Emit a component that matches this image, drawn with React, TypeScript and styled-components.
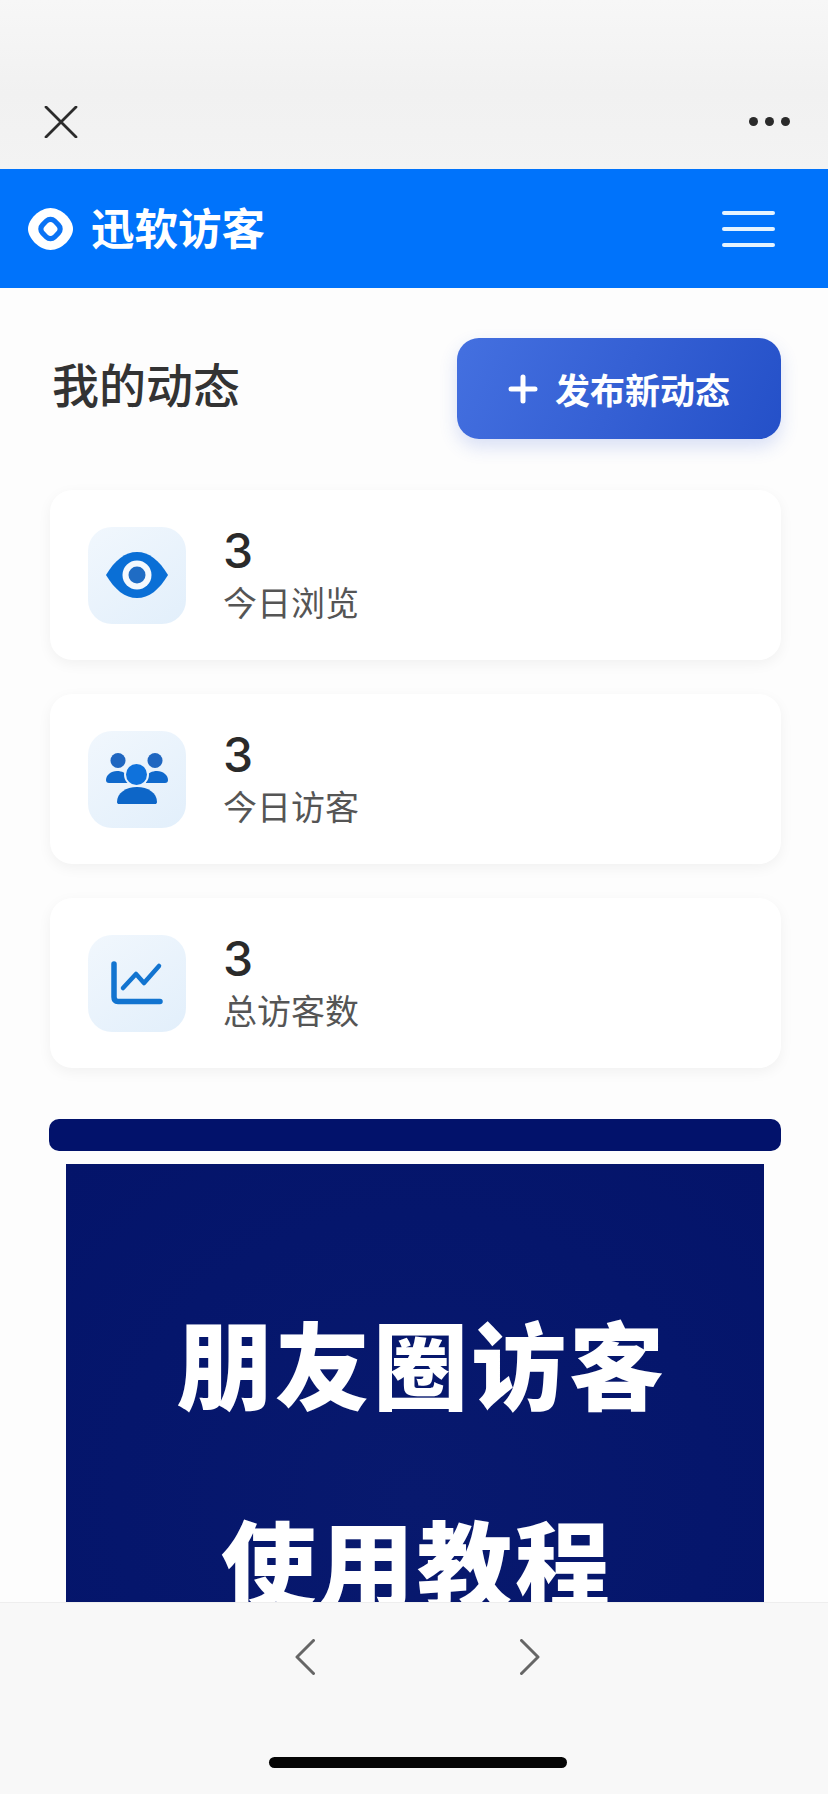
import styled, { createGlobalStyle } from "styled-components";

const cjk = '"Noto Sans CJK SC", "Liberation Sans", sans-serif';

const GlobalStyle = createGlobalStyle`
  html, body {
    margin: 0;
    padding: 0;
    background: #fff;
  }
  * {
    box-sizing: border-box;
  }
`;

const stats = [
  { value: "3", label: "今日浏览", icon: "eye" },
  { value: "3", label: "今日访客", icon: "people" },
  { value: "3", label: "总访客数", icon: "chart" },
];

const EyeIcon = () => (
  <svg width="62" height="46" viewBox="0 0 62 46">
    <path d="M0 23C9 8 19 0 31 0s22 8 31 23c-9 15-19 23-31 23S9 38 0 23z" fill="#0a6fd6" />
    <circle cx="31" cy="23" r="14.500" fill="#f4f9fe" />
    <circle cx="31" cy="23" r="8.500" fill="#1f6cc4" />
  </svg>
);

const PeopleIcon = () => (
  <svg width="62" height="52" viewBox="0 0 62 52">
    <circle cx="12" cy="7.500" r="7.500" fill="#1f66c0" />
    <circle cx="49" cy="7.500" r="7.500" fill="#1f66c0" />
    <path d="M0 27c0-5 5-9 11-9 5 0 9 2 11 6v6H3c-2 0-3-1-3-3z" fill="#0f69cc" />
    <path d="M62 27c0-5-5-9-11-9-5 0-9 2-11 6v6h19c2 0 3-1 3-3z" fill="#0f69cc" />
    <circle cx="30.500" cy="21.500" r="12.500" fill="#eaf3fc" />
    <circle cx="30.500" cy="21.500" r="10.500" fill="#0f72dc" />
    <path d="M11 49c0-9 9-15 20-15s20 6 20 15c0 1.500-1 2-2 2H13c-1 0-2-.5-2-2z" fill="#0d66c8" />
  </svg>
);

const ChartIcon = () => (
  <svg width="52" height="44" viewBox="0 0 52 44" fill="none">
    <path d="M3 3v33c0 3 1.500 4.500 4 4.500h42" stroke="#1274d0" strokeWidth="5.500" strokeLinecap="round" strokeLinejoin="round" />
    <path d="M12 27l13-14 8 9 15-17" stroke="#1274d0" strokeWidth="4.500" strokeLinecap="round" strokeLinejoin="round" />
  </svg>
);

const icons: Record<string, () => React.ReactElement> = {
  eye: EyeIcon,
  people: PeopleIcon,
  chart: ChartIcon,
};

const App = () => {
  return (
    <Page>
      <GlobalStyle />
      <TopBar>
        <svg width="34" height="32" viewBox="0 0 34 32" fill="none">
          <path d="M2 1l30 30M32 1L2 31" stroke="#2b2b2b" strokeWidth="2.800" strokeLinecap="round" />
        </svg>
        <Dots>
          <i />
          <i />
          <i />
        </Dots>
      </TopBar>
      <Header>
        <Brand>
          <svg width="45" height="42" viewBox="0 0 45 42">
            <path d="M22.500 0C33 0 45 11 45 21c0 9-11 21-22.500 21S0 30 0 21C0 11 12 0 22.500 0z" fill="#fff" />
            <rect x="11.500" y="10" width="22" height="22" rx="8" transform="rotate(45 22.500 21)" fill="#0a73f5" />
            <rect x="16.500" y="15" width="12" height="12" rx="4" transform="rotate(45 22.500 21)" fill="#fff" />
          </svg>
          <BrandName>迅软访客</BrandName>
        </Brand>
        <Burger>
          <i />
          <i />
          <i />
        </Burger>
      </Header>
      <Content>
        <TitleRow>
          <Title>我的动态</Title>
          <PublishButton>
            <svg width="30" height="30" viewBox="0 0 30 30" fill="none">
              <path d="M15 3v24M3 15h24" stroke="#fff" strokeWidth="5" strokeLinecap="round" />
            </svg>
            发布新动态
          </PublishButton>
        </TitleRow>
        <CardList>
          {stats.map((s) => {
            const Icon = icons[s.icon];
            return (
              <StatCard key={s.label}>
                <IconTile>
                  <Icon />
                </IconTile>
                <StatText>
                  <StatValue>{s.value}</StatValue>
                  <StatLabel>{s.label}</StatLabel>
                </StatText>
              </StatCard>
            );
          })}
        </CardList>
        <BannerStrip />
        <BannerPanel>
          <BannerLine $indent={14}>朋友圈访客</BannerLine>
          <BannerLine $indent={4}>使用教程</BannerLine>
        </BannerPanel>
      </Content>
      <BottomBar>
        <NavRow>
          <svg width="20" height="36" viewBox="0 0 20 36" fill="none">
            <path d="M18.500 1.500L2 18l16.500 16.500" stroke="#666" strokeWidth="3" strokeLinecap="round" strokeLinejoin="round" />
          </svg>
          <svg width="20" height="36" viewBox="0 0 20 36" fill="none">
            <path d="M1.500 1.500L18 18 1.500 34.500" stroke="#666" strokeWidth="3" strokeLinecap="round" strokeLinejoin="round" />
          </svg>
        </NavRow>
        <HomeIndicator />
      </BottomBar>
    </Page>
  );
};

export default App;

const Page = styled.div`
  width: 828px;
  height: 1794px;
  display: flex;
  flex-direction: column;
  overflow: hidden;
  background: #fcfcfc;
  font-family: ${cjk};
`;

const TopBar = styled.div`
  height: 169px;
  flex: none;
  display: flex;
  align-items: flex-start;
  justify-content: space-between;
  padding: 106px 38px 0 44px;
  background: linear-gradient(180deg, #f7f7f7 0%, #f1f1f1 55%, #f3f3f3 100%);
`;

const Dots = styled.div`
  display: flex;
  gap: 7px;
  margin-top: 11px;
  i {
    width: 9px;
    height: 9px;
    border-radius: 50%;
    background: #2a2a2a;
  }
`;

const Header = styled.div`
  height: 119px;
  flex: none;
  display: flex;
  align-items: center;
  justify-content: space-between;
  padding: 0 53px 0 28px;
  background: #0073fb;
`;

const Brand = styled.div`
  display: flex;
  align-items: center;
  gap: 18px;
`;

const BrandName = styled.div`
  font-size: 43.500px;
  font-weight: 700;
  line-height: 60px;
  padding-bottom: 3px;
  color: #fff;
`;

const Burger = styled.div`
  display: flex;
  flex-direction: column;
  gap: 12px;
  width: 53px;
  i {
    height: 4px;
    border-radius: 2px;
    background: #e4f3ff;
  }
`;

const Content = styled.div`
  flex: 1;
  min-height: 0;
  overflow: hidden;
  padding: 50px 47px 0 49px;
  background: #fdfdfd;
`;

const TitleRow = styled.div`
  display: flex;
  align-items: center;
  justify-content: space-between;
  height: 101px;
  padding-left: 3px;
`;

const Title = styled.h1`
  margin: 0;
  padding-bottom: 11px;
  font-size: 47px;
  font-weight: 500;
  line-height: 60px;
  color: #333;
`;

const PublishButton = styled.button`
  width: 324px;
  height: 101px;
  display: flex;
  align-items: center;
  justify-content: center;
  gap: 17px;
  border: none;
  border-radius: 22px;
  background: linear-gradient(115deg, #4470e0 0%, #3560d4 50%, #2450c8 100%);
  box-shadow: 0 8px 18px rgba(50, 90, 210, 0.18);
  font-family: ${cjk};
  font-size: 35px;
  font-weight: 700;
  color: #fff;
`;

const CardList = styled.div`
  display: flex;
  flex-direction: column;
  gap: 34px;
  margin-top: 51px;
`;

const StatCard = styled.div`
  height: 170px;
  display: flex;
  align-items: center;
  gap: 37px;
  margin-left: 1px;
  padding-left: 38px;
  border-radius: 22px;
  background: #fff;
  box-shadow: 0 4px 14px rgba(0, 0, 0, 0.05);
`;

const IconTile = styled.div`
  width: 98px;
  height: 97px;
  flex: none;
  display: flex;
  align-items: center;
  justify-content: center;
  border-radius: 24px;
  background: linear-gradient(145deg, #f1f7fd 0%, #e2effb 100%);
`;

const StatText = styled.div`
  display: flex;
  flex-direction: column;
`;

const StatValue = styled.div`
  font-family: Inter, "Liberation Sans", sans-serif;
  font-size: 48px;
  font-weight: 500;
  line-height: 54px;
  color: #2a2a2a;
`;

const StatLabel = styled.div`
  font-size: 34px;
  font-weight: 400;
  line-height: 48px;
  color: #555;
`;

const BannerStrip = styled.div`
  height: 32px;
  margin-top: 51px;
  border-radius: 10px;
  background: #02126b;
`;

const BannerPanel = styled.div`
  height: 560px;
  margin: 13px 17px 0;
  padding-top: 98px;
  background: radial-gradient(ellipse at 50% 60%, #08196e 0%, #05166c 60%, #04146a 100%);
`;

const BannerLine = styled.div<{ $indent: number }>`
  padding-left: ${(p) => p.$indent}px;
  font-size: 95px;
  font-weight: 900;
  letter-spacing: 3px;
  line-height: 199px;
  text-align: center;
  color: #fff;
`;

const BottomBar = styled.div`
  height: 192px;
  flex: none;
  display: flex;
  flex-direction: column;
  align-items: center;
  padding-top: 36px;
  background: #f8f8f8;
  border-top: 1px solid #eeeeee;
`;

const NavRow = styled.div`
  display: flex;
  gap: 205px;
  margin-left: 6px;
`;

const HomeIndicator = styled.div`
  width: 298px;
  height: 11px;
  margin-top: 82px;
  margin-left: 7px;
  border-radius: 6px;
  background: #050505;
`;
